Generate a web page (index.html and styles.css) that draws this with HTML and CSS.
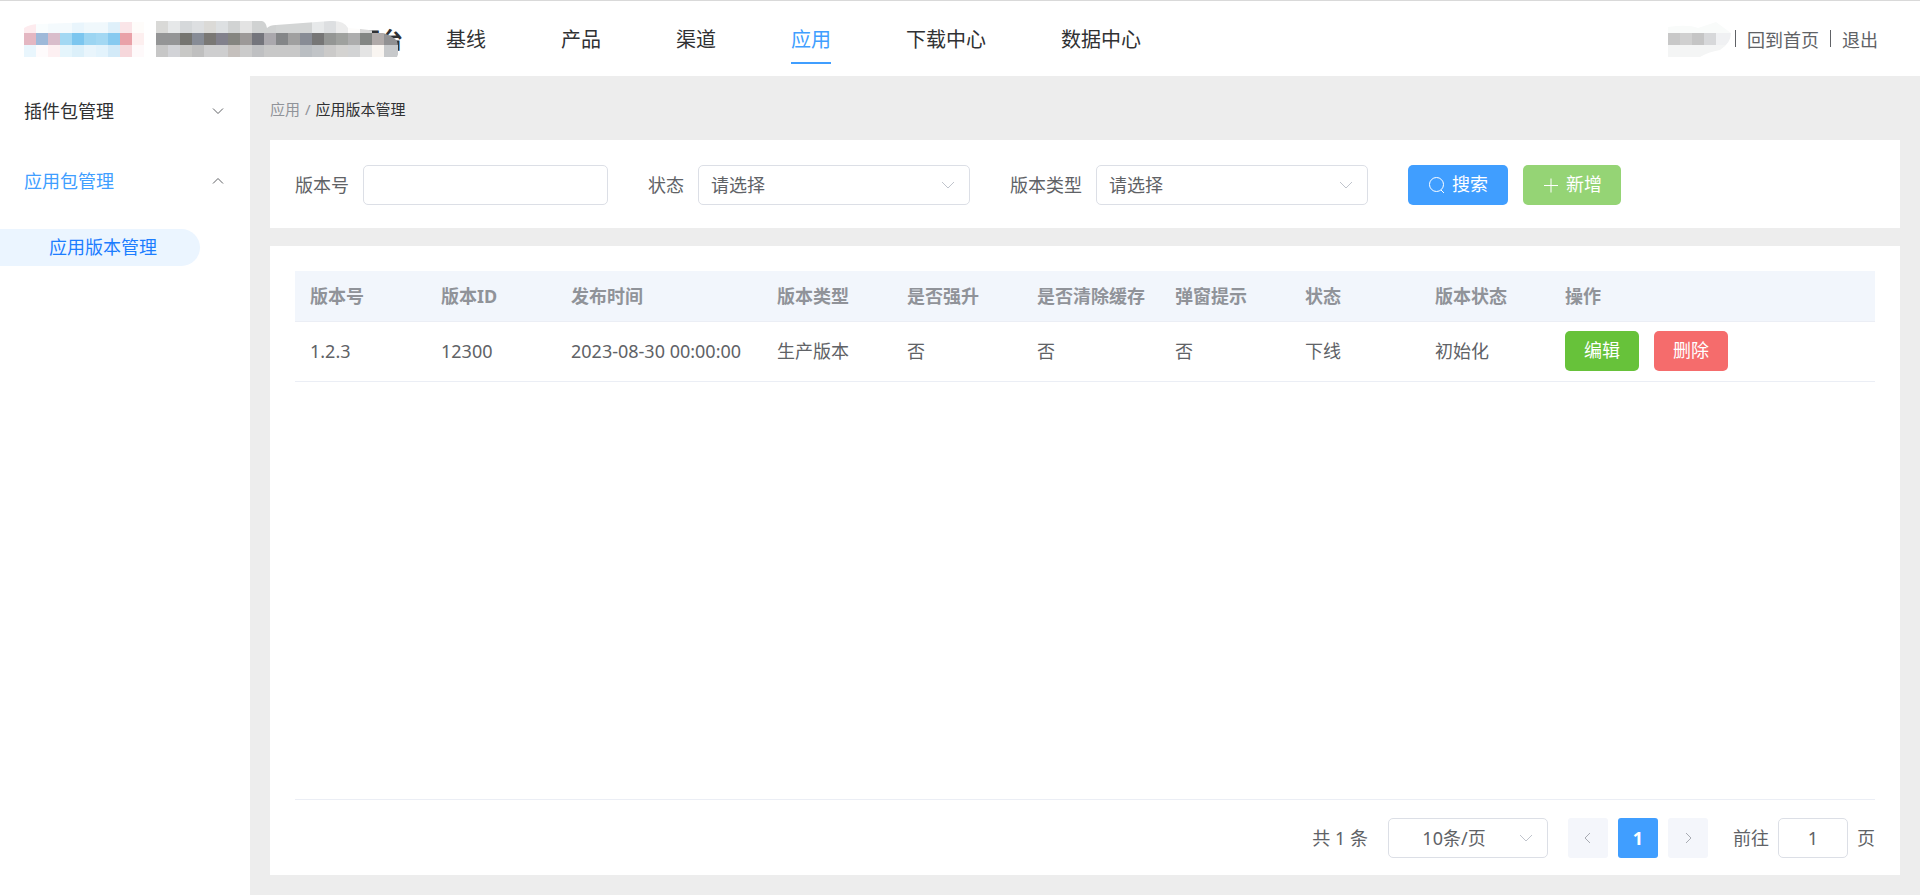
FILE: index.html
```html
<!DOCTYPE html>
<html lang="zh-CN">
<head>
<meta charset="utf-8">
<title>应用版本管理</title>
<link rel="stylesheet" href="styles.css">
</head>
<body>
<header class="topbar">
  <div class="brand">
    <span class="brand-name">平台</span>
    <svg class="brand-mask" width="376" height="38" viewBox="24 20 376 38" aria-hidden="true">
      <defs>
        <clipPath id="brand-clip"><path d="M24 28Q30 24 40 24Q80 22 130 22L144 22V57H24ZM156 21H262Q266 22 267 28Q270 25 276 25L330 21Q344 20 348 28L360 29Q388 31 397 41Q400 52 397 57H156Z"/></clipPath>
      </defs>
      <g clip-path="url(#brand-clip)">
        <path fill="#fdebee" d="M24 21h12v12H24z"/><path fill="#f9fdfe" d="M36 21h12v12H36z"/><path fill="#f4fafd" d="M48 21h24v12H48z"/><path fill="#e9f5fc" d="M72 21h12v12H72z"/><path fill="#f0f8fc" d="M84 21h24v12H84z"/><path fill="#dff0fa" d="M108 21h12v12h-12z"/><path fill="#fae5e8" d="M120 21h12v12h-12z"/><path fill="#fefcfa" d="M132 21h12v12h-12z"/>
        <path fill="#e4b7c2" d="M24 33h12v12H24z"/><path fill="#9eb9d9" d="M36 33h12v12H36z"/><path fill="#d9bdcb" d="M48 33h12v12H48z"/><path fill="#a3d8f3" d="M60 33h12v12H60z"/><path fill="#7cc6ef" d="M72 33h12v12H72z"/><path fill="#9cd5f2" d="M84 33h12v12H84z"/><path fill="#a3d8f3" d="M96 33h12v12H96z"/><path fill="#87caf0" d="M108 33h12v12h-12z"/><path fill="#e9a1a8" d="M120 33h12v12h-12z"/><path fill="#fdefef" d="M132 33h12v12h-12z"/>
        <path fill="#e9f6fd" d="M24 45h12v12H24z"/><path fill="#fefbfc" d="M36 45h12v12H36z"/><path fill="#fdf0f2" d="M48 45h12v12H48z"/><path fill="#e5f5fc" d="M60 45h12v12H60z"/><path fill="#dcf0fa" d="M72 45h12v12H72z"/><path fill="#e9f5fc" d="M84 45h12v12H84z"/><path fill="#e3f3fc" d="M96 45h12v12H96z"/><path fill="#d3eaf8" d="M108 45h12v12h-12z"/><path fill="#f6d7db" d="M120 45h12v12h-12z"/><path fill="#fef9fa" d="M132 45h12v12h-12z"/>
        <path fill="#d9d9d7" d="M156 21h12v12h-12z"/><path fill="#e6e8e9" d="M168 21h12v12h-12z"/><path fill="#d5d8da" d="M180 21h12v12h-12z"/><path fill="#dddfe1" d="M192 21h12v12h-12z"/><path fill="#dbdad7" d="M204 21h12v12h-12z"/><path fill="#dde0e2" d="M216 21h12v12h-12z"/><path fill="#d1d3d3" d="M228 21h12v12h-12z"/><path fill="#e3e3e3" d="M240 21h12v12h-12z"/><path fill="#d0d2d2" d="M252 21h24v12h-24z"/><path fill="#d3d5d5" d="M276 21h36v12h-36z"/><path fill="#e7e9ea" d="M312 21h12v12h-12z"/><path fill="#dddfe1" d="M324 21h12v12h-12z"/><path fill="#ececec" d="M336 21h12v12h-12z"/><path fill="#fdfcfb" d="M348 21h12v12h-12z"/><path fill="#d8d8d8" d="M360 21h12v12h-12z"/>
        <path fill="#949596" d="M156 33h24v12h-24z"/><path fill="#757570" d="M180 33h12v12h-12z"/><path fill="#878c96" d="M192 33h12v12h-12z"/><path fill="#7a7875" d="M204 33h12v12h-12z"/><path fill="#82818c" d="M216 33h12v12h-12z"/><path fill="#858580" d="M228 33h12v12h-12z"/><path fill="#9c9998" d="M240 33h12v12h-12z"/><path fill="#74757c" d="M252 33h12v12h-12z"/><path fill="#aaa8ad" d="M264 33h12v12h-12z"/><path fill="#848688" d="M276 33h12v12h-12z"/><path fill="#a0a0a0" d="M288 33h12v12h-12z"/><path fill="#888c95" d="M300 33h12v12h-12z"/><path fill="#767676" d="M312 33h12v12h-12z"/><path fill="#949694" d="M324 33h12v12h-12z"/><path fill="#9fa19e" d="M336 33h12v12h-12z"/><path fill="#adadad" d="M348 33h12v12h-12z"/><path fill="#838684" d="M360 33h12v12h-12z"/><path fill="#b0aaa9" d="M372 33h12v12h-12z"/><path fill="#919193" d="M384 33h14v12h-14z"/>
        <path fill="#c7c7c7" d="M156 45h12v12h-12z"/><path fill="#d2d3d7" d="M168 45h12v12h-12z"/><path fill="#c8c8c6" d="M180 45h12v12h-12z"/><path fill="#bfbfbf" d="M192 45h12v12h-12z"/><path fill="#cececf" d="M204 45h24v12h-24z"/><path fill="#c5c0bd" d="M228 45h12v12h-12z"/><path fill="#cbcbcb" d="M240 45h12v12h-12z"/><path fill="#bfc0c2" d="M252 45h12v12h-12z"/><path fill="#c8c8c8" d="M264 45h36v12h-36z"/><path fill="#babec2" d="M300 45h12v12h-12z"/><path fill="#c1c4c7" d="M312 45h12v12h-12z"/><path fill="#cbcac9" d="M324 45h12v12h-12z"/><path fill="#d4d3d1" d="M336 45h12v12h-12z"/><path fill="#d2d3d4" d="M348 45h12v12h-12z"/><path fill="#e4e4e4" d="M360 45h12v12h-12z"/><path fill="#f9f5f1" d="M372 45h12v12h-12z"/><path fill="#c7c9cb" d="M384 45h14v12h-14z"/>
      </g>
    </svg>
  </div>
  <nav class="mainnav">
    <a href="#">基线</a>
    <a href="#">产品</a>
    <a href="#">渠道</a>
    <a href="#" class="active">应用</a>
    <a href="#">下载中心</a>
    <a href="#">数据中心</a>
  </nav>
  <div class="account">
    <svg class="user-mask" width="64" height="36" viewBox="1668 21 64 36" aria-hidden="true">
      <defs><clipPath id="user-clip"><path d="M1668 27Q1688 24 1698 28L1716 22L1731 33Q1731 43 1720 50Q1708 52 1700 57H1668Z"/></clipPath></defs>
      <g clip-path="url(#user-clip)">
        <path fill="#f9fbfa" d="M1668 21h64v12h-64z"/><path fill="#f4f5f5" d="M1668 45h64v12h-64z"/>
        <path fill="#c8c8c8" d="M1668 33h12v12h-12z"/><path fill="#d0d0d0" d="M1680 33h12v12h-12z"/><path fill="#c5c5c5" d="M1692 33h12v12h-12z"/><path fill="#d7d8da" d="M1704 33h12v12h-12z"/><path fill="#f0f1f3" d="M1716 33h16v12h-16z"/>
      </g>
    </svg>
    <span class="sep"></span>
    <a href="#">回到首页</a>
    <span class="sep"></span>
    <a href="#">退出</a>
  </div>
</header>
<div class="shell">
  <aside class="sidebar">
    <button type="button" class="group">插件包管理
      <svg class="caret" width="12" height="12" viewBox="0 0 12 12"><path d="M1 3.500l5 5 5-5"/></svg>
    </button>
    <button type="button" class="group open">应用包管理
      <svg class="caret" width="12" height="12" viewBox="0 0 12 12"><path d="M1 8.500l5-5 5 5"/></svg>
    </button>
    <a href="#" class="subitem">应用版本管理</a>
  </aside>
  <main class="content">
    <nav class="crumbs"><a href="#">应用</a><span>/</span><strong>应用版本管理</strong></nav>
    <form class="card filters">
      <div class="field">
        <label for="version">版本号</label>
        <input id="version" type="text" class="control version-input">
      </div>
      <div class="field">
        <label for="status">状态</label>
        <div class="select filter-select">
          <select id="status" class="control"><option>请选择</option></select>
          <svg class="arrow" width="14" height="14" viewBox="0 0 14 14"><path d="M1 4l6 6 6-6"/></svg>
        </div>
      </div>
      <div class="field">
        <label for="kind">版本类型</label>
        <div class="select filter-select">
          <select id="kind" class="control"><option>请选择</option></select>
          <svg class="arrow" width="14" height="14" viewBox="0 0 14 14"><path d="M1 4l6 6 6-6"/></svg>
        </div>
      </div>
      <div class="actions">
        <button type="button" class="btn primary"><svg width="18" height="18" viewBox="0 0 18 18"><circle cx="8.500" cy="9.500" r="7"/><path d="M13 15l3 3"/></svg>搜索</button>
        <button type="button" class="btn add"><svg width="18" height="18" viewBox="0 0 18 18"><path d="M2 10.500h14M9 3.500v14"/></svg>新增</button>
      </div>
    </form>
    <section class="card listing">
      <div class="table-wrap">
        <table>
          <colgroup>
            <col class="c-first"><col class="c-std"><col class="c-time"><col class="c-std"><col class="c-std"><col class="c-cache"><col class="c-std"><col class="c-std"><col class="c-std"><col>
          </colgroup>
          <thead>
            <tr><th>版本号</th><th>版本ID</th><th>发布时间</th><th>版本类型</th><th>是否强升</th><th>是否清除缓存</th><th>弹窗提示</th><th>状态</th><th>版本状态</th><th>操作</th></tr>
          </thead>
          <tbody>
            <tr><td>1.2.3</td><td>12300</td><td>2023-08-30 00:00:00</td><td>生产版本</td><td>否</td><td>否</td><td>否</td><td>下线</td><td>初始化</td>
              <td><div class="row-actions"><button type="button" class="btn edit">编辑</button><button type="button" class="btn delete">删除</button></div></td></tr>
          </tbody>
        </table>
      </div>
      <div class="pager">
        <span class="total">共 1 条</span>
        <div class="select size-select">
          <select class="control" aria-label="每页条数"><option>10条/页</option></select>
          <svg class="arrow" width="14" height="14" viewBox="0 0 14 14"><path d="M1 4l6 6 6-6"/></svg>
        </div>
        <div class="pages">
          <button type="button" class="page" aria-label="上一页"><svg width="14" height="14" viewBox="0 0 14 14"><path d="M9 2L4 7l5 5"/></svg></button>
          <button type="button" class="page current">1</button>
          <button type="button" class="page" aria-label="下一页"><svg width="14" height="14" viewBox="0 0 14 14"><path d="M5 2l5 5-5 5"/></svg></button>
        </div>
        <div class="jump">
          <label for="goto">前往</label>
          <input id="goto" type="text" class="control goto" value="1">
          <span>页</span>
        </div>
      </div>
    </section>
  </main>
</div>
</body>
</html>
```
FILE: styles.css
```css
* { box-sizing: border-box; }

body {
  display: flex;
  flex-direction: column;
  min-height: 100vh;
  margin: 0;
  background: #ededed;
  color: #606266;
  font: 400 18px/24px "Noto Sans", "Noto Sans CJK SC", sans-serif;
}

a { color: inherit; text-decoration: none; }
button, input, select { font: inherit; color: inherit; }
button { border: 0; cursor: pointer; }
svg { flex: none; fill: none; stroke: currentColor; }

/* Top bar */
.topbar {
  display: flex;
  align-items: center;
  height: 76px;
  padding: 0 42px 0 24px;
  border-top: 1px solid #d9d9d9;
  background: #fff;
}
.brand {
  position: relative;
  display: flex;
  justify-content: flex-end;
  width: 379px;
  height: 38px;
}
.brand-name { color: #303133; font-size: 22px; font-weight: 700; line-height: 38px; }
.brand-mask { position: absolute; top: 0; left: 0; stroke: none; }
.mainnav { display: flex; gap: 75px; margin-left: 43px; color: #303133; font-size: 20px; }
.mainnav a { padding: 14px 0 10px; border-bottom: 2px solid transparent; }
.mainnav .active { border-color: #409eff; color: #409eff; }
.account { display: flex; align-items: center; gap: 11px; margin-left: auto; }
.account a { padding-top: 2px; }
.user-mask { margin-right: -8px; stroke: none; }
.sep { width: 1px; height: 17px; background: #606266; }

/* Shell */
.shell { display: flex; flex: 1; }
.sidebar { display: flex; flex-direction: column; flex: none; width: 250px; background: #fff; }
.group {
  display: flex;
  align-items: center;
  justify-content: space-between;
  height: 70px;
  padding: 0 26px 0 24px;
  background: none;
  color: #303133;
}
.group.open { color: #409eff; }
.caret { color: #606266; }
.subitem {
  width: 200px;
  margin-top: 13px;
  padding: 6px 0 7px 49px;
  border-radius: 0 19px 19px 0;
  background: #ebf5ff;
  color: #1c7dff;
}
.content { display: flex; flex: 1; flex-direction: column; min-width: 0; padding: 0 20px 20px; }
.crumbs { display: flex; gap: 5px; padding: 21px 0 19px; color: #909399; font-size: 15px; }
.crumbs strong { color: #303133; font-weight: 400; }

/* Filters */
.card { background: #fff; }
.filters { display: flex; gap: 40px; margin-bottom: 18px; padding: 25px 25px 23px; }
.field { display: flex; align-items: center; gap: 14px; }
.control {
  width: 100%;
  height: 40px;
  padding: 0 12px;
  border: 1px solid #dcdfe6;
  border-radius: 5px;
  background: #fff;
  appearance: none;
}
.version-input { width: 245px; }
.select { position: relative; }
.filter-select { width: 272px; }
.arrow { position: absolute; top: 13px; right: 15px; color: #c0c4cc; pointer-events: none; }
.actions { display: flex; gap: 15px; }
.btn {
  display: flex;
  align-items: center;
  gap: 6px;
  height: 40px;
  padding: 0 19px 2px;
  border-radius: 5px;
  color: #fff;
}
.primary { padding: 0 20px 2px; background: #409eff; }
.add { background: #95d475; }
.edit { background: #67c23a; }
.delete { background: #f56c6c; }

/* Table */
.listing { display: flex; flex: 1; flex-direction: column; padding: 25px 25px 17px; }
.table-wrap { flex: 1; border-bottom: 1px solid #ebeef5; }
table { width: 100%; border-collapse: collapse; table-layout: fixed; }
.c-first { width: 131px; }
.c-std { width: 130px; }
.c-time { width: 206px; }
.c-cache { width: 138px; }
th, td { padding: 0 0 0 15px; border-bottom: 1px solid #ebeef5; text-align: left; white-space: nowrap; }
th { height: 50px; background: #f2f6fc; color: #909399; font-weight: 700; }
td { height: 60px; }
.row-actions { display: flex; gap: 15px; }

/* Pagination */
.pager { display: flex; align-items: center; justify-content: flex-end; padding-top: 18px; }
.size-select { width: 160px; margin: 0 20px; }
.size-select select { padding: 0 41px 0 13px; text-align-last: center; }
.pages { display: flex; gap: 10px; }
.page {
  display: flex;
  align-items: center;
  justify-content: center;
  width: 40px;
  height: 40px;
  padding: 0;
  border-radius: 3px;
  background: #f4f6fb;
  color: #a8abb2;
}
.current { background: #409eff; color: #fff; font-weight: 700; }
.jump { display: flex; align-items: center; gap: 9px; margin-left: 25px; }
.goto { width: 70px; text-align: center; }
```
